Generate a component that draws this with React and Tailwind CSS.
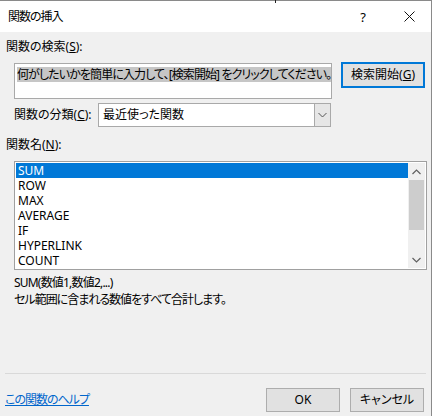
import React from "react";

const items = ["SUM", "ROW", "MAX", "AVERAGE", "IF", "HYPERLINK", "COUNT"];

export default function App() {
  return (
    <div className="w-[433px] h-[416px] bg-white overflow-hidden text-[12px] text-black [font-family:'Noto_Sans','Noto_Sans_CJK_JP',sans-serif] [font-feature-settings:'palt']">
      <div className="w-[432px] h-[416px] flex flex-col border-t border-r border-[#8a8a8a] relative">
        <div className="absolute left-[275px] top-[-1px] w-[1px] h-[3px] bg-[#222]" />
        {/* title bar */}
        <div className="h-[31px] bg-white flex items-center pl-[8px] shrink-0">
          <span className="leading-[16px] tracking-[-1px]">関数の挿入</span>
          <div className="flex-1" />
          <span className="leading-[16px] mr-[38px] text-[13px]">?</span>
          <svg width="11" height="11" viewBox="0 0 11 11" className="mr-[16px]">
            <path d="M0.5 0.5 L10.5 10.5 M10.5 0.5 L0.5 10.5" stroke="#111" strokeWidth="1" />
          </svg>
        </div>
        {/* body */}
        <div className="flex-1 bg-[#f0f0f0] flex flex-col">
          <div className="pl-[6px] pt-[7px] leading-[16px]">
            関数の検索(<span className="underline">S</span>):
          </div>
          <div className="flex items-start mt-[7px]">
            <div className="ml-[14px] mt-[1px] w-[318px] h-[36px] bg-white border border-[#a9a9a9] pl-[2px] pt-[2px] overflow-hidden">
              <span className="bg-[#c6c6c6] leading-[15px] inline-block whitespace-nowrap tracking-[-0.9px]">
                何がしたいかを簡単に入力して、[検索開始] をクリックしてください。
              </span>
            </div>
            <div className="ml-[9px] w-[84px] h-[26px] border-2 border-[#0078d7] bg-[#e1e1e1] flex items-center justify-center leading-[16px] whitespace-nowrap">
              検索開始(<span className="underline">G</span>)
            </div>
          </div>
          <div className="flex items-center mt-[4px]">
            <div className="ml-[14px] w-[84px] leading-[16px] whitespace-nowrap">
              関数の分類(<span className="underline">C</span>):
            </div>
            <div className="w-[233px] h-[24px] bg-white border border-[#a9a9a9] flex items-center">
              <span className="pl-[4px] flex-1 leading-[16px]">最近使った関数</span>
              <div className="w-[16px] h-[22px] bg-[#e6e6e6] border-l border-[#a9a9a9] flex items-center justify-center">
                <svg width="9" height="6" viewBox="0 0 9 6">
                  <path d="M0.5 1 L4.5 5 L8.5 1" stroke="#555" strokeWidth="1" fill="none" />
                </svg>
              </div>
            </div>
          </div>
          <div className="pl-[6px] mt-[10px] leading-[16px]">
            関数名(<span className="underline">N</span>):
          </div>
          <div className="ml-[14px] mt-[8px] w-[413px] h-[109px] bg-white border border-[#a0a0a0] p-[1px] flex">
            <div className="flex-1 flex flex-col">
              {items.map((it, i) => (
                <div
                  key={it}
                  className={
                    i === 0
                      ? "h-[15px] leading-[15px] pl-[2px] bg-[#0078d7] text-white"
                      : "h-[15px] leading-[15px] pl-[2px]"
                  }
                >
                  {it}
                </div>
              ))}
            </div>
            <div className="w-[17px] bg-[#f0f0f0] flex flex-col">
              <div className="h-[17px] flex items-center justify-center">
                <svg width="9" height="6" viewBox="0 0 9 6">
                  <path d="M0.5 5 L4.5 1 L8.5 5" stroke="#606060" strokeWidth="1.2" fill="none" />
                </svg>
              </div>
              <div className="h-[50px] bg-[#cdcdcd] mx-[1px]" />
              <div className="flex-1" />
              <div className="h-[17px] flex items-center justify-center">
                <svg width="9" height="6" viewBox="0 0 9 6">
                  <path d="M0.5 1 L4.5 5 L8.5 1" stroke="#606060" strokeWidth="1.2" fill="none" />
                </svg>
              </div>
            </div>
          </div>
          <div className="pl-[14px] mt-[4px] leading-[17px] tracking-[-0.8px]">SUM(数値1,数値2,...)</div>
          <div className="pl-[14px] leading-[17px] tracking-[-1px]">セル範囲に含まれる数値をすべて合計します。</div>
          <div className="flex-1" />
          <div className="ml-[5px] w-[421px] h-[1px] bg-[#d9d9d9]" />
          <div className="flex items-center mt-[14px] mb-[4px] h-[24px]">
            <span className="pl-[5px] text-[#0066cc] underline leading-[16px] tracking-[-1px]">この関数のヘルプ</span>
            <div className="flex-1" />
            <div className="w-[74px] h-[24px] border border-[#adadad] bg-[#e1e1e1] flex items-center justify-center leading-[16px]">
              OK
            </div>
            <div className="ml-[10px] mr-[7px] w-[74px] h-[24px] border border-[#adadad] bg-[#e1e1e1] flex items-center justify-center leading-[16px]">
              キャンセル
            </div>
          </div>
        </div>
      </div>
    </div>
  );
}
